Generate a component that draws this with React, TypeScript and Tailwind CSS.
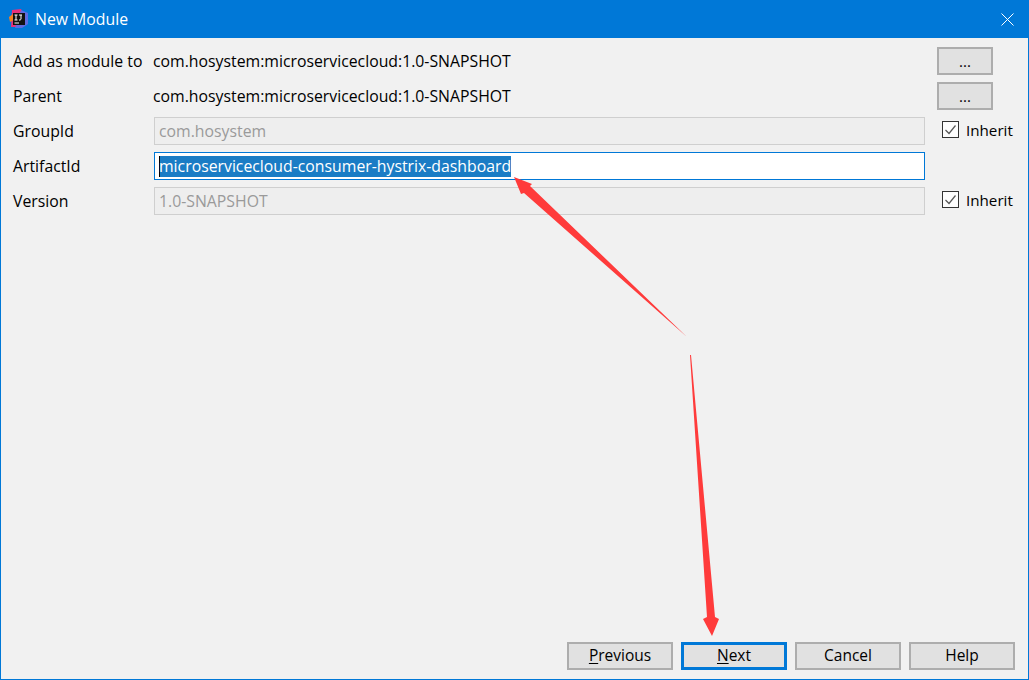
const FONT = "font-['Open_Sans','Noto_Sans',sans-serif]";

function FormLabel({ children }: { children: string }) {
  return <span className="text-[15.8px] text-black">{children}</span>;
}

function DotsButton() {
  return (
    <button className="w-14 h-7 ml-3 border-2 border-[#adadad] bg-[#e1e1e1] text-[15px] text-black leading-none">
      ...
    </button>
  );
}

function Inherit() {
  return (
    <div className="flex items-center ml-[17px] mb-[2px] gap-[7px]">
      <span className="w-[17px] h-[17px] border border-[#333333] bg-[#fdfdfd] flex items-center justify-center">
        <svg width="13" height="13" viewBox="0 0 13 13" fill="none">
          <path d="M1.5 7 L5 10.5 L11.5 2.5" stroke="#555555" strokeWidth="1.2" />
        </svg>
      </span>
      <span className="text-[15.2px] text-black">Inherit</span>
    </div>
  );
}

function ReadOnlyInput({ value }: { value: string }) {
  return (
    <div className="w-[771px] h-7 ml-px px-1 pt-[2px] flex items-center border border-[#cfcfcf] bg-[#eeeeee] text-[15.8px] text-[#9a9a9a]">
      {value}
    </div>
  );
}

function FooterButton({ label, hot, primary }: { label: string; hot?: string; primary?: boolean }) {
  const rest = hot ? label.slice(hot.length) : label;
  return (
    <button
      className={
        primary
          ? "w-[106px] h-7 border-[3px] border-[#0078d7] bg-[#e1e1e1] text-[15.5px] text-black leading-none"
          : "w-[106px] h-7 border-2 border-[#adadad] bg-[#e1e1e1] text-[15.5px] text-black leading-none"
      }
    >
      {hot && <span className="underline underline-offset-2">{hot}</span>}
      {rest}
    </button>
  );
}

function IdeaLogo() {
  return (
    <svg width="20" height="20" viewBox="0 0 20 20">
      <path d="M3 1 L12 0 L14 4 L9 18 L2 18 Z" fill="#e8317c" />
      <path d="M12 1 L19 4 L19 15 L13 19 L6 19 Z" fill="#5f6be0" />
      <path d="M0 8 L4 5 L5 11 L1 13 Z" fill="#f58220" />
      <rect x="4" y="4" width="12" height="12" fill="#111111" />
      <path d="M5.5 6h3M7 6v5M5.5 11h3M10 6h3M12 6v4.3l-.8.7h-1.2M5.5 14h4.5" stroke="#ffffff" strokeWidth="1" fill="none" />
    </svg>
  );
}

export default function App() {
  return (
    <div className={`relative w-[1029px] h-[680px] flex flex-col bg-[#f1f1f1] border-x border-b border-[#0078d7] overflow-hidden ${FONT}`}>
      <div className="h-[38px] -mx-px shrink-0 flex items-center bg-[#0078d7] pl-[9px] pr-[15px] text-white">
        <IdeaLogo />
        <span className="ml-[6px] pt-[2px] text-[15.8px] flex-1">New Module</span>
        <svg width="13" height="13" viewBox="0 0 13 13" stroke="#ffffff" strokeWidth="1" fill="none">
          <path d="M0.5 0.5 L12.5 12.5 M12.5 0.5 L0.5 12.5" />
        </svg>
      </div>

      <div className="flex-1 pl-3 pt-[9px] flex flex-col gap-[7px]">
        <div className="flex items-center h-7">
          <div className="w-[140px] pt-px"><FormLabel>Add as module to</FormLabel></div>
          <span className="w-[772px] pt-[2px] text-[15.8px] text-black">com.hosystem:microservicecloud:1.0-SNAPSHOT</span>
          <DotsButton />
        </div>
        <div className="flex items-center h-7">
          <div className="w-[140px] pt-px"><FormLabel>Parent</FormLabel></div>
          <span className="w-[772px] pt-[2px] text-[15.8px] text-black">com.hosystem:microservicecloud:1.0-SNAPSHOT</span>
          <DotsButton />
        </div>
        <div className="flex items-center h-7">
          <div className="w-[140px] pt-px"><FormLabel>GroupId</FormLabel></div>
          <ReadOnlyInput value="com.hosystem" />
          <Inherit />
        </div>
        <div className="flex items-center h-7">
          <div className="w-[140px] pt-px"><FormLabel>ArtifactId</FormLabel></div>
          <div className="w-[771px] h-7 ml-px px-1 flex items-center border border-[#0078d7] bg-white text-[15.8px]">
            <span className="bg-[#1a7cc5] shadow-[inset_1px_0_0_#000000] text-white h-[21px] pt-[2px] flex items-center">microservicecloud-consumer-hystrix-dashboard</span>
          </div>
        </div>
        <div className="flex items-center h-7">
          <div className="w-[140px] pt-px"><FormLabel>Version</FormLabel></div>
          <ReadOnlyInput value="1.0-SNAPSHOT" />
          <Inherit />
        </div>
      </div>

      <div className="flex justify-end gap-2 pr-[13px] pb-[9px]">
        <FooterButton label="Previous" hot="P" />
        <FooterButton label="Next" hot="N" primary />
        <FooterButton label="Cancel" />
        <FooterButton label="Help" />
      </div>

      {/* red annotation arrows pasted over the dialog */}
      <svg className="absolute -left-px top-0 pointer-events-none" width="1029" height="680" viewBox="0 0 1029 680">
        <path d="M514 177 L532 184 L530 186 L687 337 L524 193 L521 194 Z" fill="#ff3b3b" />
        <path d="M690 355 L691 355 L715 617 L719 619 L712 636 L703 619 L707 617 Z" fill="#ff3b3b" />
      </svg>
    </div>
  );
}
